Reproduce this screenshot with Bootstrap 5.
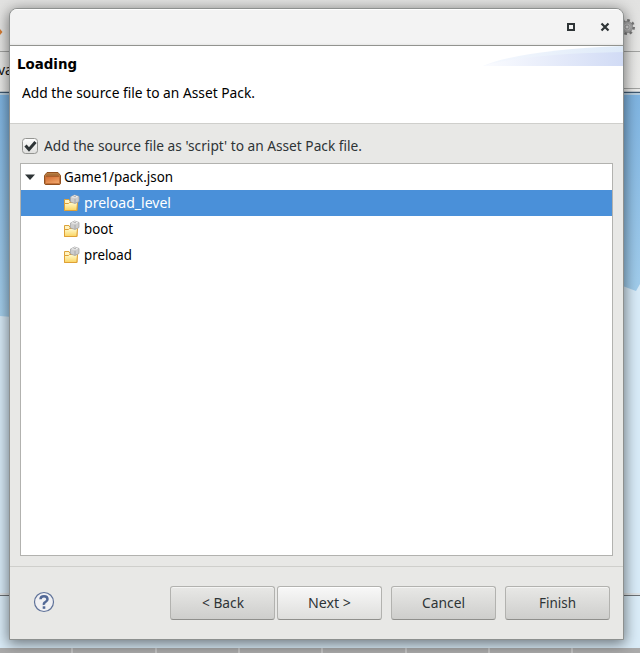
<!DOCTYPE html>
<html lang="en">
<head>
<meta charset="utf-8">
<meta name="viewport" content="width=device-width, initial-scale=1">
<title>Loading</title>
<link rel="stylesheet" href="https://cdn.jsdelivr.net/npm/bootstrap@5.3.0/dist/css/bootstrap.min.css">
<style>
body{width:640px;height:653px;font:14px/26px "Noto Sans",sans-serif;color:#000;background:#e4e4e2}
.backdrop{left:0;top:0;z-index:-1}
.dialog{width:615px;height:632px;margin:8px 0 0 9px;border:1px solid #8d908f;border-radius:8px 8px 0 0;background:#e8e8e6;box-shadow:0 3px 14px 1px rgba(0,0,0,.5)}
.titlebar{height:37px;padding-right:12px;gap:22px;border-bottom:1px solid #92938f;background:linear-gradient(#fff 0 1px,#f3f3f3 1px 34px,#e7e7e6);border-radius:7px 7px 0 0}
.titlebar button{width:12px;height:12px}
.banner{height:78px;border-bottom:1px solid #cfcfcc;padding:5px 0 0 7px}
.banner h1{font:bold 14px/26px "DejaVu Sans",sans-serif}
.banner p{padding:3px 0 0 5px}
.tx{display:inline-block;white-space:pre;transform-origin:0 50%}
.swoosh{right:0;top:0}
.checkline{height:39px;padding:9px 0 0 11px;gap:5px;color:#2e3436}
.tree{width:593px;height:393px;margin-left:10px;border:1px solid #b2b2af;background:#fff}
.tree li{height:26px}
.tree .root{padding-left:4px}
.tree .kid{padding-left:42px;gap:4px}
.tree .picked{background:#4a90d9;color:#fff}
.actions{height:73px;margin-top:10px;border-top:1px solid #cfcfcc;padding:0 13px 0 23px}
.help{margin-bottom:2px}
.key{width:105px;height:34px;padding:0;border:1px solid #b2b2af;border-bottom-color:#8f8f8c;border-radius:3px;font-size:14px;line-height:30px;color:#2e3436;background:linear-gradient(#e8e8e6,#cececc);box-shadow:inset 0 1px #f4f4f3}
.key.next{margin:0 9px 0 2px;background:linear-gradient(#f8f8f8,#dededc);box-shadow:inset 0 1px #fff}
</style>
</head>
<body class="overflow-hidden position-relative">
<svg class="backdrop position-absolute" width="640" height="653" aria-hidden="true">
  <defs>
    <linearGradient id="sky" x2="0" y2="1"><stop stop-color="#7fb4e1"/><stop offset=".45" stop-color="#a6d0ed"/><stop offset="1" stop-color="#b4d8ee"/></linearGradient>
    <linearGradient id="bar" x2="0" y2="1"><stop stop-color="#e2e2e1"/><stop offset="1" stop-color="#eaeae8"/></linearGradient>
  </defs>
  <rect width="640" height="92" fill="url(#bar)"/>
  <path d="M0 51.5H640M623 88.5H640" stroke="#a2a3a1"/>
  <path d="M0 92.500H640" stroke="#3f5a73" stroke-width="1.400"/>
  <path d="M0 94H640" stroke="#b7cddd" stroke-width="2"/>
  <rect y="95" width="640" height="500" fill="url(#sky)"/>
  <path d="M0 316l12 1v278H0zM620 285l16 6 4-7v311h-20z" fill="#d8ebf8"/>
  <rect y="595" width="640" height="53" fill="#daecf8"/>
  <path d="M0 594H640" stroke="#dde2e5" stroke-width="2"/><path d="M0 595.500H640" stroke="#6b7176"/>
  <rect y="648" width="640" height="5" fill="#ababab"/>
  <path d="M72 648v5M156 648v5M239 648v5M322 648v5M406 648v5M489 648v5M572 648v5" stroke="#c3c3c3" stroke-width="2"/>
  <path d="M0 29l2.500 3L0 35z" fill="#d67b32"/>
  <g transform="translate(627 27)" fill="none"><circle r="6.700" stroke="#777" stroke-width="2.600" stroke-dasharray="2.630 2.630"/><circle r="4.500" fill="#c4c4c4" stroke="#a8a8a8" stroke-width="2.200"/><circle r="5.700" stroke="#808080" stroke-width=".7"/><circle r="2" fill="#ddd" stroke="#8a8a8a" stroke-width=".8"/></g>
  <text x="-2" y="75" font-family="Noto Sans" font-size="14" fill="#111">va</text>
</svg>
<main class="dialog d-flex flex-column">
  <header class="titlebar d-flex justify-content-end align-items-center flex-shrink-0">
    <button class="border-0 p-0 bg-transparent d-flex" aria-label="Maximize"><svg width="12" height="12"><rect x="3" y="3" width="6" height="6" fill="none" stroke="#2e3436" stroke-width="2"/></svg></button>
    <button class="border-0 p-0 bg-transparent d-flex" aria-label="Close"><svg width="12" height="12"><path d="M2.500 2.500l7 7m0-7l-7 7" stroke="#2e3436" stroke-width="2.200"/></svg></button>
  </header>
  <section class="banner bg-white position-relative flex-shrink-0">
    <svg class="swoosh position-absolute" width="140" height="20" aria-hidden="true"><defs><linearGradient id="sw"><stop stop-color="#fbfcff"/><stop offset="1" stop-color="#d1dbf5"/></linearGradient><linearGradient id="sw2"><stop stop-color="#f5f8fe"/><stop offset="1" stop-color="#deeaf8"/></linearGradient></defs><path d="M0 20Q38 4 140 0V20z" fill="url(#sw2)"/><path d="M0 20Q40 8 140 6V20z" fill="url(#sw)"/></svg>
    <h1 class="m-0"><span class="tx" data-w="60">Loading</span></h1>
    <p class="m-0"><span class="tx" data-w="233">Add the source file to an Asset Pack.</span></p>
  </section>
  <label class="checkline d-flex align-items-start flex-shrink-0">
    <svg class="flex-shrink-0" width="18" height="26"><defs><linearGradient id="ck" x2="0" y2="1"><stop stop-color="#fff"/><stop offset="1" stop-color="#dededc"/></linearGradient></defs><rect x="1.500" y="5.500" width="15" height="15" rx="3" fill="url(#ck)" stroke="#949592"/><path d="M4.500 12.500l3.500 4L14.500 9" fill="none" stroke="#2e3436" stroke-width="3"/></svg>
    <span class="tx" data-w="318">Add the source file as 'script' to an Asset Pack file.</span>
  </label>
  <ul class="tree list-unstyled mb-0 flex-shrink-0">
    <li class="root d-flex align-items-center">
      <svg width="10" height="6"><path d="M0 .5h10L5 6z" fill="#2e3436"/></svg>
      <svg style="margin:1px 3px 0 9px" width="17" height="14"><defs><linearGradient id="box" x2=".7" y2="1"><stop stop-color="#d06a30"/><stop offset="1" stop-color="#f0a468"/></linearGradient></defs><path d="M.5 4.500L3 1.500h11l2.500 3v7.500q0 1.500-1.500 1.500H2Q.5 13.500.5 12z" fill="#c98a4b" stroke="#91501f"/><rect x="1.500" y="5.500" width="14" height="7" rx="1" fill="url(#box)" stroke="#c06a34" stroke-width=".8"/><path d="M3 2.500h11l1.200 1.800H1.800z" fill="#a9713a"/><path d="M1.500 5h14" stroke="#8a481a" stroke-width=".8"/></svg>
      <span class="tx" data-w="109">Game1/pack.json</span>
    </li>
    <li class="kid picked d-flex align-items-center"><svg width="17" height="18"><use href="#folder"/></svg><span class="tx" data-w="87">preload_level</span></li>
    <li class="kid d-flex align-items-center"><svg width="17" height="18"><use href="#folder"/></svg><span class="tx" data-w="29">boot</span></li>
    <li class="kid d-flex align-items-center"><svg width="17" height="18"><use href="#folder"/></svg><span class="tx" data-w="48">preload</span></li>
  </ul>
  <footer class="actions d-flex align-items-center flex-shrink-0">
    <svg class="help me-auto" width="22" height="22" role="img" aria-label="Help"><circle cx="11" cy="11" r="9.500" fill="#f0f0f3" stroke="#5f7299" stroke-width="1.200"/><path d="M7.500 8.300Q7.500 5.200 11 5.200T14.500 8.300Q14.500 10 12.500 11T11 13.800" fill="none" stroke="#526896" stroke-width="2.500"/><rect x="9.700" y="15.300" width="2.600" height="2.500" fill="#526896"/></svg>
    <button class="btn key"><span class="tx" data-w="42">&lt; Back</span></button>
    <button class="btn key next"><span class="tx" data-w="43">Next &gt;</span></button>
    <button class="btn key"><span class="tx" data-w="43">Cancel</span></button>
    <button class="btn key" style="margin-left:9px"><span class="tx" data-w="37">Finish</span></button>
  </footer>
</main>
<svg width="0" height="0" class="position-absolute" aria-hidden="true">
  <defs><linearGradient id="fy" x2="0" y2="1"><stop stop-color="#fffbd0"/><stop offset="1" stop-color="#fad460"/></linearGradient></defs>
  <symbol id="folder" viewBox="0 0 17 18"><path d="M1.500 16.500V5.500h4.500l1 2h7v9z" fill="#fff3c0" stroke="#dba23a"/><path d="M1.500 9.500h4l1-1h8l-.7 8H1.500z" fill="url(#fy)" stroke="#dfa036"/><path d="M7.500 3l4-2 4.500 1.500v5l-4 2-4.500-1.500z" fill="#cdcdcd" stroke="#a4a4a4" stroke-width=".8"/><path d="M8 3l3.500-1.700 4 1.300-3.500 1.700z" fill="#f0f0f0"/><path d="M12 4.800v4.400" stroke="#a0a0a0" stroke-width=".8"/><path d="M10.500 2.200h2.500v1h-2.500z" fill="#aaa"/></symbol>
</svg>
<script src="https://cdn.jsdelivr.net/npm/bootstrap@5.3.0/dist/js/bootstrap.bundle.min.js"></script>
<script>
// Condense each label to its set width without changing its height.
document.querySelectorAll('.tx').forEach(el => {
  const natural = el.getBoundingClientRect().width, wanted = +el.dataset.w;
  el.style.transform = `scaleX(${wanted / natural})`;
  el.style.marginRight = `${wanted - natural}px`;
});
</script>
</body>
</html>
